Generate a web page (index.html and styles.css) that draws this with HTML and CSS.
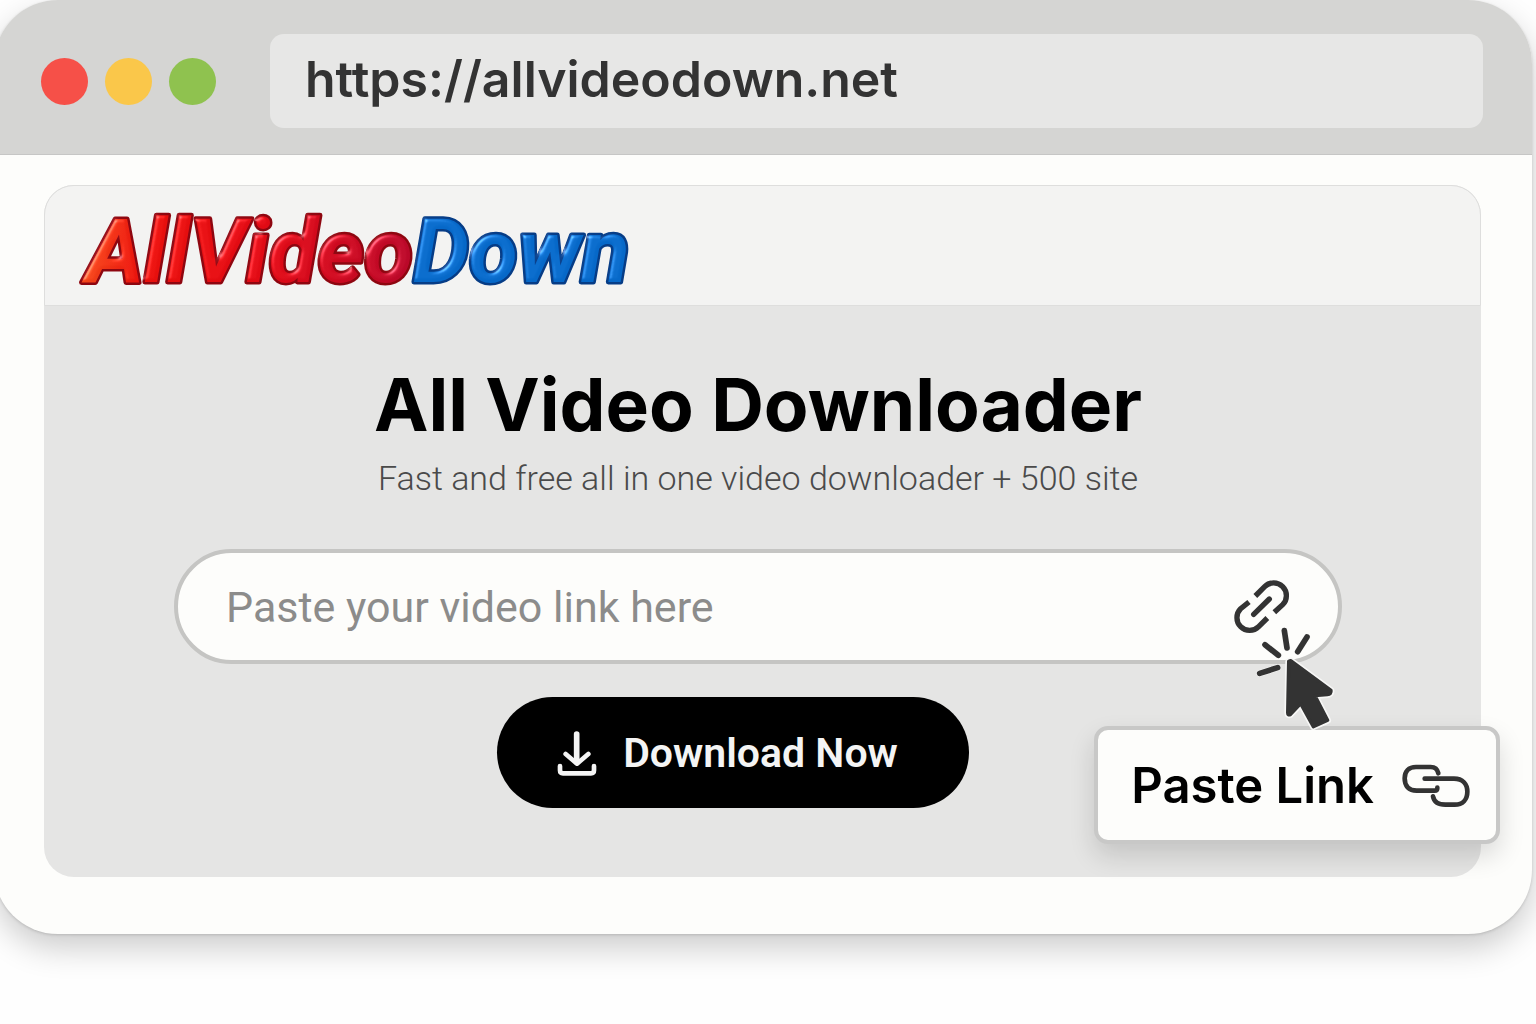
FILE: index.html
```html
<!DOCTYPE html>
<html lang="en">

<head>
    <meta charset="UTF-8">
    <meta name="viewport" content="width=device-width, initial-scale=1">
    <title>All Video Downloader</title>
    <link rel="stylesheet" href="styles.css">
</head>

<body>
    <div class="browser">
        <header class="titlebar">
            <div class="dots">
                <span class="dot red"></span>
                <span class="dot yellow"></span>
                <span class="dot green"></span>
            </div>
            <input class="address" type="text" aria-label="Address" value="https://allvideodown.net">
        </header>
        <main class="page">
            <section class="panel">
                <div class="panel-header">
                    <svg class="logo" viewBox="0 0 560 92" role="img" aria-label="AllVideoDown">
                        <defs>
                            <linearGradient id="logo-red" gradientUnits="userSpaceOnUse" x1="0" y1="30" x2="340" y2="60">
                                <stop offset="0" stop-color="#f4501c" />
                                <stop offset="0.2" stop-color="#e8100c" />
                                <stop offset="0.55" stop-color="#e00a14" />
                                <stop offset="1" stop-color="#b8082a" />
                            </linearGradient>
                            <filter id="bevel" x="-5%" y="-10%" width="110%" height="120%" color-interpolation-filters="sRGB">
                                <feGaussianBlur in="SourceAlpha" stdDeviation="2.5" result="soft" />
                                <feSpecularLighting in="soft" surfaceScale="5" specularConstant="0.8" specularExponent="20" lighting-color="#ffffff" result="light">
                                    <feDistantLight azimuth="225" elevation="30" />
                                </feSpecularLighting>
                                <feComposite in="light" in2="SourceAlpha" operator="in" result="lit" />
                                <feComposite in="SourceGraphic" in2="lit" operator="arithmetic" k2="1" k3="0.5" />
                            </filter>
                        </defs>
                        <text class="logo-text" x="8" y="83" filter="url(#bevel)"><tspan class="logo-red">AllVideo</tspan><tspan class="logo-blue">Down</tspan></text>
                    </svg>
                </div>
                <div class="panel-body">
                    <h1>All Video Downloader</h1>
                    <p class="tagline">Fast and free all in one video downloader + 500 site</p>
                    <form class="download-form">
                        <div class="field">
                            <input class="link-input" type="text" aria-label="Video link" placeholder="Paste your video link here">
                            <svg class="link-icon" viewBox="0 0 171 162">
                                <path d="M67 48 L95 20 A38 38 0 0 1 149 74 L124 97" />
                                <path d="M48 66 L23 86 A38 38 0 0 0 77 140 L103 114" />
                                <path class="round" d="M62 103 L109 57" />
                            </svg>
                            <svg class="cursor" viewBox="0 0 240 309">
                                <path class="halo" d="M88 11 L96 63 M156 30 L128 74 M30 53 L70 85 M14 139 L68 122" />
                                <path class="spark" d="M88 11 L96 63 M156 30 L128 74 M30 53 L70 85 M14 139 L68 122" />
                                <path class="halo" d="M107 101 L228 190 Q230 202 217 203 L180 206 L218 280 L175 299 L137 230 L106 263 Q98 266 98 257 L101 103 Z" />
                                <path class="arrow" d="M107 101 L228 190 Q230 202 217 203 L180 206 L218 280 L175 299 L137 230 L106 263 Q98 266 98 257 L101 103 Z" />
                            </svg>
                        </div>
                        <button class="download" type="button">
                            <svg class="download-icon" viewBox="0 0 120 138">
                                <path class="shaft" d="M59 12 V96" />
                                <path class="head" d="M26 72 L60 101 L94 72" />
                                <path class="tray" d="M9 108 V121 Q9 130 18 130 H102 Q111 130 111 121 V108" />
                            </svg>
                            Download Now
                        </button>
                    </form>
                </div>
                <button class="paste" type="button">
                    Paste Link
                    <svg class="chain-icon" viewBox="0 0 204 129">
                        <path d="M109 28 C106 14 97 9 86 9 H42 C20 9 8 22 8 43 C8 66 20 80 44 80 H98 C104 80 106 76 106 71" />
                        <path d="M68 44 H156 C182 44 196 60 196 83 C196 106 182 122 158 122 H130 C110 122 96 113 93 97" />
                    </svg>
                </button>
            </section>
        </main>
    </div>
</body>

</html>
```
FILE: styles.css
```css
* {
    box-sizing: border-box;
}

body {
    display: flow-root;
    min-height: 100vh;
    margin: 0;
    background-color: #fefefe;
    font-family: Inter, "Liberation Sans", sans-serif;
}

input,
button {
    font-family: inherit;
    margin: 0;
}

/* browser window, slightly wider than the view on the left */
.browser {
    margin: 0 4px 0 -6px;
    border-radius: 64px;
    background-color: #fdfdfb;
    box-shadow: 0 14px 32px rgba(0, 0, 0, .2), 0 1px 3px rgba(0, 0, 0, .15);
}

.titlebar {
    display: flex;
    align-items: center;
    gap: 54px;
    padding: 34px 49px 26px 47px;
    border-radius: 64px 64px 0 0;
    border-bottom: 1px solid #c6c6c5;
    background-color: #d5d5d3;
}

.dots {
    display: flex;
    gap: 17px;
}

.dot {
    width: 47px;
    height: 47px;
    border-radius: 50%;
}

.red {
    background-color: #f65048;
}

.yellow {
    background-color: #fac74a;
}

.green {
    background-color: #8fc24f;
}

.address {
    flex: 1;
    min-width: 0;
    height: 94px;
    padding: 0 35px 4px;
    border: 0;
    border-radius: 14px;
    background-color: #e7e7e6;
    color: #333;
    font-size: 50px;
    font-weight: 600;
}

.page {
    padding: 30px 51px 57px 50px;
}

.panel {
    position: relative;
    border-radius: 30px;
    background-color: #e5e5e4;
}

.panel-header {
    padding: 14px 30px;
    border: 1px solid #dededd;
    border-radius: 30px 30px 0 0;
    background-color: #f3f3f2;
}

.logo {
    display: block;
    width: 560px;
    max-width: 100%;
    height: 91px;
    overflow: visible;
}

.logo-text {
    font-family: Roboto, "Open Sans", sans-serif;
    font-size: 90px;
    font-style: italic;
    font-weight: 700;
    paint-order: stroke;
    stroke-width: 5px;
    stroke-linejoin: round;
}

.logo-red {
    fill: url(#logo-red);
    stroke: #8e0610;
}

.logo-blue {
    fill: #0668c8;
    stroke: #063c86;
}

.panel-body {
    padding: 57px 139px 69px 130px;
    text-align: center;
}

h1 {
    margin: 0;
    color: #000;
    font-size: 73px;
    font-weight: 650;
    line-height: 84px;
}

.tagline {
    margin: 11px 0 0;
    color: #4a4a4a;
    font-family: Roboto, sans-serif;
    font-size: 34px;
    font-weight: 320;
    line-height: 40px;
}

.download-form {
    margin-top: 51px;
}

.field {
    position: relative;
    display: flex;
    align-items: center;
    height: 115px;
    padding: 0 48px;
    border: 4px solid #c5c5c3;
    border-radius: 58px;
    background-color: #fdfdfb;
}

.link-input {
    flex: 1;
    min-width: 0;
    padding: 0;
    border: 0;
    outline: 0;
    background: none;
    color: #333;
    font-family: Roboto, sans-serif;
    font-size: 43px;
}

.link-input::placeholder {
    color: #8c8c8b;
}

.link-icon {
    width: 57px;
    height: 54px;
    fill: none;
    stroke: #333;
    stroke-width: 16;
}

.round {
    stroke-linecap: round;
}

/* mouse pointer over the end of the field */
.cursor {
    position: absolute;
    top: 74px;
    right: 3px;
    z-index: 2;
    width: 80px;
    height: 103px;
    fill: none;
    stroke-linecap: round;
    stroke-linejoin: round;
}

.halo {
    stroke: #f7f7f6;
    stroke-width: 20;
}

.spark {
    stroke: #333;
    stroke-width: 17;
}

.arrow {
    fill: #333;
    stroke: #333;
    stroke-width: 10;
}

.download {
    display: inline-flex;
    align-items: center;
    gap: 26px;
    height: 111px;
    margin: 33px 50px 0 0;
    padding: 0 71px 0 60px;
    border: 0;
    border-radius: 56px;
    background-color: #000;
    color: #f4f4f4;
    font-family: Roboto, sans-serif;
    font-size: 41px;
    font-weight: 600;
}

.download-icon {
    width: 40px;
    height: 46px;
    fill: none;
    stroke: #f4f4f4;
    stroke-linecap: round;
    stroke-linejoin: round;
}

.shaft {
    stroke-width: 17;
}

.head,
.tray {
    stroke-width: 14;
}

.paste {
    position: absolute;
    right: -19px;
    bottom: 33px;
    display: flex;
    align-items: center;
    gap: 28px;
    height: 118px;
    padding: 0 26px 0 33px;
    border: 4px solid #c8c8c7;
    border-radius: 14px;
    background-color: #fdfdfb;
    box-shadow: 0 12px 26px rgba(0, 0, 0, .14);
    color: #000;
    font-size: 49px;
    font-weight: 600;
}

.chain-icon {
    width: 68px;
    height: 43px;
    fill: none;
    stroke: #333;
    stroke-width: 14;
    stroke-linecap: round;
}
```
